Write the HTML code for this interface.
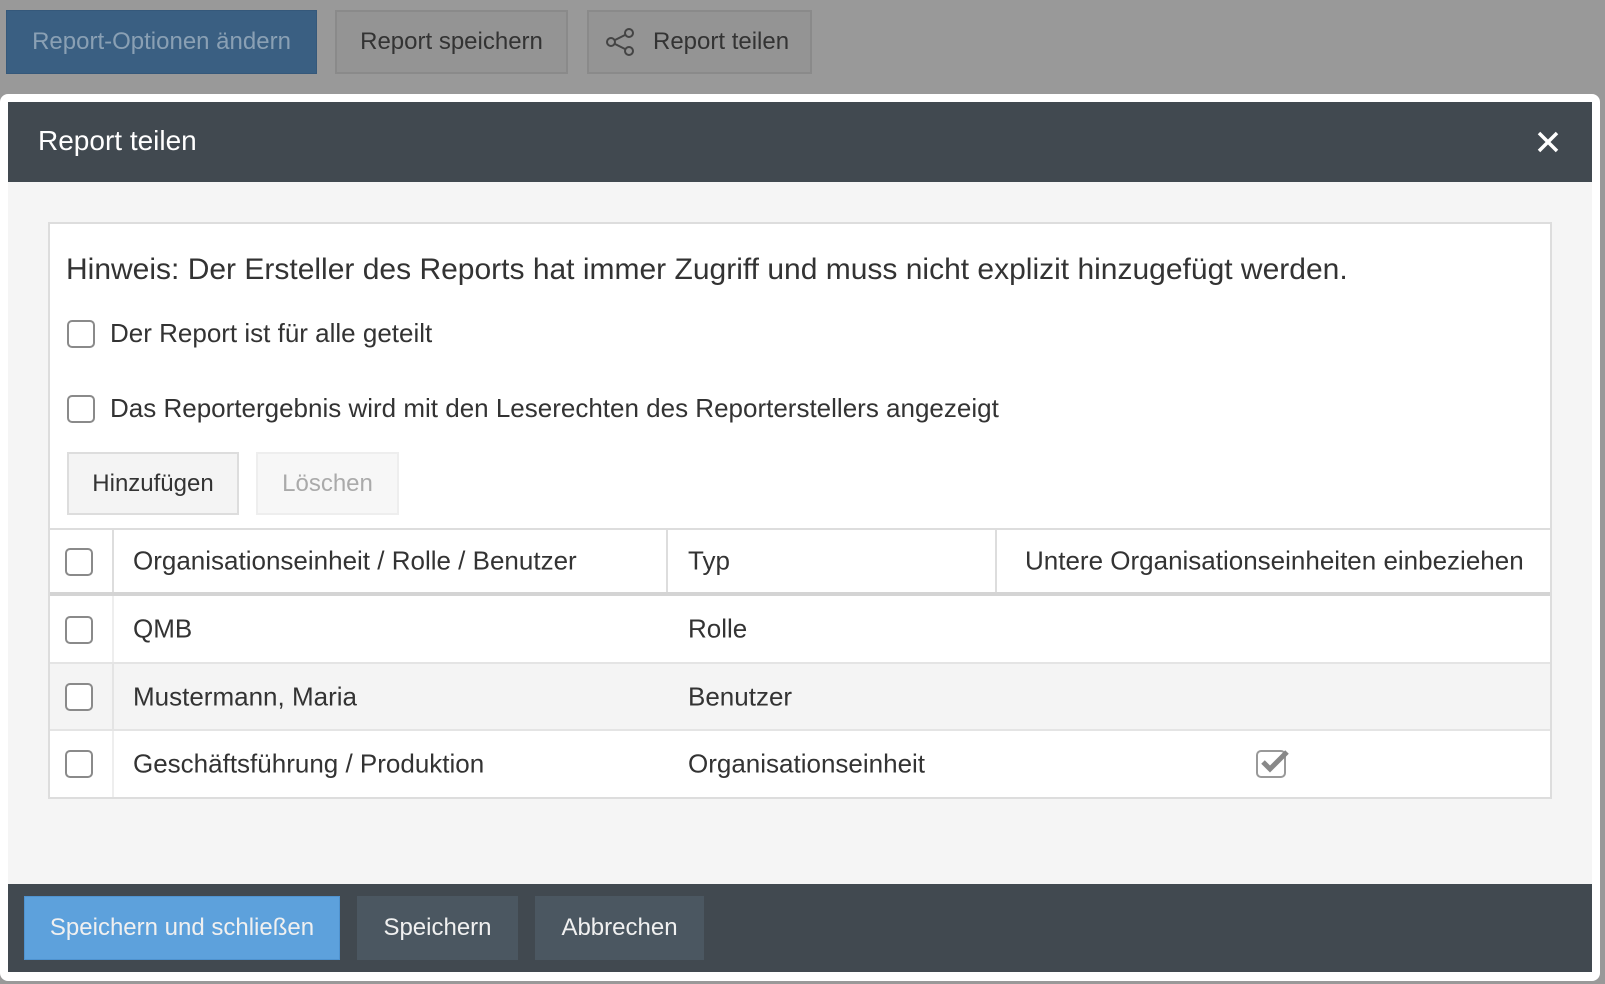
<!DOCTYPE html>
<html><head><meta charset="utf-8"><style>
*{box-sizing:border-box;margin:0;padding:0}
body{width:1605px;height:984px;background:#999;font-family:"Liberation Sans",Arial,sans-serif;position:relative;overflow:hidden;color:#333}
.a{position:absolute}
.tb{position:absolute;top:10px;height:64px;display:flex;align-items:center;justify-content:center;font-size:24px}
.cb{position:absolute;width:28px;height:28px;border:2px solid #8a8a8a;border-radius:5px;background:#fff}
.row{position:absolute;left:0;right:0;border-bottom:2px solid #e4e4e4;font-size:26px}
.row span{position:absolute;top:50%;transform:translateY(-50%)}
.fb{position:absolute;top:896px;height:64px;display:flex;align-items:center;justify-content:center;font-size:24px;color:#f0f0f0}
</style></head><body>
<div class="tb" style="left:6px;width:311px;background:#3a5f82;color:#8aa0b4;border:1px solid #35587a">Report-Optionen ändern</div>
<div class="tb" style="left:335px;width:233px;background:#949494;border:2px solid #8a8a8a">Report speichern</div>
<div class="tb" style="left:587px;width:225px;background:#949494;border:2px solid #8a8a8a;justify-content:flex-start;padding-left:16px"><svg width="32" height="30" viewBox="0 0 32 30" style="margin-right:16px"><g fill="none" stroke="#444" stroke-width="2"><circle cx="6" cy="15" r="4"/><circle cx="24" cy="6" r="4"/><circle cx="24" cy="24" r="4"/><path d="M10 13L20 8M10 17L20 22"/></g></svg>Report teilen</div>

<div class="a" style="left:0;top:94px;width:1600px;height:887px;background:#fff;border-radius:8px"></div>
<div class="a" style="left:8px;top:102px;width:1584px;height:80px;background:#414950;color:#fff;font-size:28px;padding:23px 0 0 30px">Report teilen
<svg class="a" style="right:32px;top:28px" width="24" height="24" viewBox="0 0 24 24"><path d="M3 3L21 21M21 3L3 21" stroke="#fff" stroke-width="3.5"/></svg></div>
<div class="a" style="left:8px;top:182px;width:1584px;height:702px;background:#f5f5f5"></div>

<div class="a" style="left:48px;top:222px;width:1504px;height:577px;background:#fff;border:2px solid #ddd">
 <div class="a" style="left:16px;top:29px;font-size:30px;white-space:nowrap">Hinweis: Der Ersteller des Reports hat immer Zugriff und muss nicht explizit hinzugefügt werden.</div>
 <div class="cb" style="left:17px;top:96px"></div>
 <div class="a" style="left:60px;top:94px;font-size:26px">Der Report ist für alle geteilt</div>
 <div class="cb" style="left:17px;top:171px"></div>
 <div class="a" style="left:60px;top:169px;font-size:26px">Das Reportergebnis wird mit den Leserechten des Reporterstellers angezeigt</div>
 <div class="a" style="left:17px;top:228px;width:172px;height:63px;background:#f4f4f4;border:2px solid #ddd;font-size:24px;display:flex;align-items:center;justify-content:center">Hinzufügen</div>
 <div class="a" style="left:206px;top:228px;width:143px;height:63px;background:#f7f7f7;border:2px solid #eee;color:#aaa;font-size:24px;display:flex;align-items:center;justify-content:center">Löschen</div>
 <div class="a" style="left:0;right:0;top:304px;height:269px">
  <div class="row" style="top:0;height:68px;border-top:2px solid #ddd;border-bottom:4px solid #d4d4d4">
   <div class="cb" style="left:15px;top:18px"></div>
   <div class="a" style="left:62px;top:0;bottom:0;border-left:2px solid #ddd"></div>
   <div class="a" style="left:616px;top:0;bottom:0;border-left:2px solid #ddd"></div>
   <div class="a" style="left:945px;top:0;bottom:0;border-left:2px solid #ddd"></div>
   <span style="left:83px">Organisationseinheit / Rolle / Benutzer</span><span style="left:638px">Typ</span><span style="left:975px">Untere Organisationseinheiten einbeziehen</span>
  </div>
  <div class="row" style="top:68px;height:68px;background:#fff">
   <div class="cb" style="left:15px;top:20px"></div><div class="a" style="left:62px;top:0;bottom:0;border-left:2px solid #eee"></div>
   <span style="left:83px">QMB</span><span style="left:638px">Rolle</span></div>
  <div class="row" style="top:136px;height:67px;background:#f4f4f4">
   <div class="cb" style="left:15px;top:19px"></div><div class="a" style="left:62px;top:0;bottom:0;border-left:2px solid #e4e4e4"></div>
   <span style="left:83px">Mustermann, Maria</span><span style="left:638px">Benutzer</span></div>
  <div class="row" style="top:203px;height:66px;background:#fff;border-bottom:none">
   <div class="cb" style="left:15px;top:19px"></div><div class="a" style="left:62px;top:0;bottom:0;border-left:2px solid #eee"></div>
   <span style="left:83px">Geschäftsführung / Produktion</span><span style="left:638px">Organisationseinheit</span>
   <svg class="a" style="left:1206px;top:17px" width="36" height="30" viewBox="0 0 36 30"><rect x="1" y="3" width="28" height="26" rx="4" fill="none" stroke="#999" stroke-width="2"/><path d="M7 14L14 21L31 4" fill="none" stroke="#888" stroke-width="5"/></svg>
  </div>
 </div>
</div>

<div class="a" style="left:8px;top:884px;width:1584px;height:88px;background:#414950"></div>
<div class="fb" style="left:24px;width:316px;background:#5da1dc;border:1px solid #4f93d0">Speichern und schließen</div>
<div class="fb" style="left:357px;width:161px;background:#4b5761">Speichern</div>
<div class="fb" style="left:535px;width:169px;background:#4b5761">Abbrechen</div>
</body></html>
